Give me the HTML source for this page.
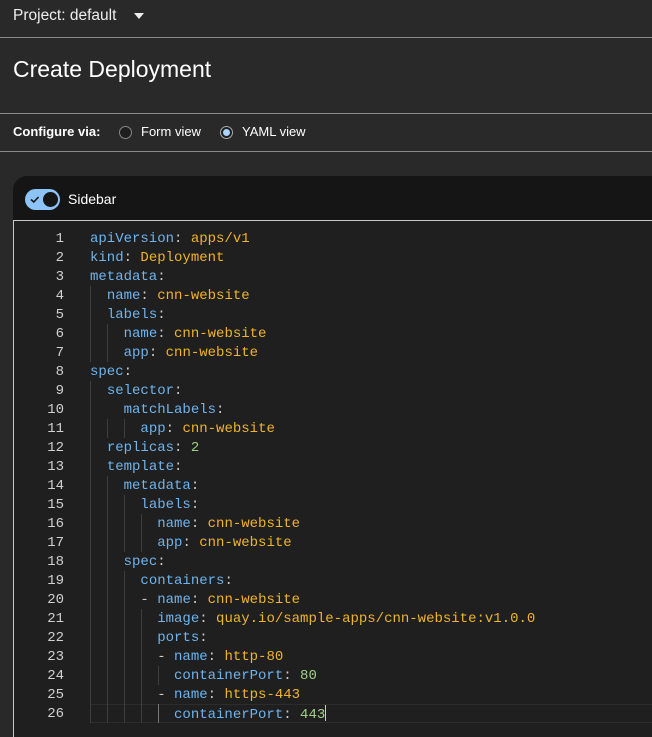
<!DOCTYPE html>
<html style="overflow:hidden;height:737px"><head><meta charset="utf-8"><style>
*{margin:0;padding:0;box-sizing:border-box}
body{width:652px;height:737px;background:#292929;font-family:"Liberation Sans",sans-serif;color:#fff;position:relative;overflow:hidden}
.hr{position:absolute;left:0;width:652px;height:1px;background:#8a8a8a}
.t{position:absolute;white-space:nowrap}
.card{position:absolute;left:13px;top:176px;width:660px;height:561px;background:#151515;border-radius:14px 0 0 0}
.ed{position:absolute;left:13px;top:220px;width:660px;height:517px;background:#1f1f1f;border-top:1px solid #c8c8c8;border-left:1px solid #c8c8c8}
.code{position:absolute;left:0;top:230px;font-family:"Liberation Mono",monospace;font-size:14px;line-height:19px}
.ln{position:absolute;left:0;width:64px;text-align:right;color:#d0d0d0}
.c{position:absolute;left:90px;white-space:pre;color:#9cd0ff}
.k{color:#6fb4ee}.v{color:#f0b429}.n{color:#9fcf85}.p{color:#ccc}
.g{position:absolute;width:1px;background:#3e3e3e}
</style></head><body>
<div class="t" style="left:13px;top:7px;font-size:15.5px;color:#eee">Project: default</div>
<div style="position:absolute;left:134px;top:13px;width:0;height:0;border-left:5px solid transparent;border-right:5px solid transparent;border-top:6px solid #eee"></div>
<div class="hr" style="top:37px"></div>
<div class="t" style="left:13px;top:56px;font-size:23px;color:#fff">Create Deployment</div>
<div class="hr" style="top:113px"></div>
<div class="t" style="left:13px;top:124px;font-size:13px;font-weight:bold">Configure via:</div>
<div style="position:absolute;left:119px;top:126px;width:13px;height:13px;border:1px solid #888;border-radius:50%;background:#1e1e1e"></div>
<div class="t" style="left:141px;top:124px;font-size:13px">Form view</div>
<div style="position:absolute;left:220px;top:126px;width:13px;height:13px;border:1px solid #aaa;border-radius:50%;background:#1e1e1e"><div style="position:absolute;left:2px;top:2px;width:7px;height:7px;border-radius:50%;background:#a8d4ff"></div></div>
<div class="t" style="left:242px;top:124px;font-size:13px">YAML view</div>
<div class="hr" style="top:151px"></div>
<div class="card"></div>
<div style="position:absolute;left:25px;top:189px;width:35px;height:21px;border-radius:11px;background:#8cc4f8"></div>
<div style="position:absolute;left:43px;top:192px;width:15px;height:15px;border-radius:50%;background:#151515"></div>
<svg style="position:absolute;left:30px;top:195px" width="10" height="9"><path d="M1 4.5 L3.8 7 L8.5 2" stroke="#151515" stroke-width="1.6" fill="none"/></svg>
<div class="t" style="left:68px;top:191px;font-size:14px">Sidebar</div>
<div class="ed"></div>
<div style="position:absolute;left:90px;top:704px;width:562px;height:19px;border-top:1px solid #2c2c2c;border-bottom:1px solid #2c2c2c"></div>
<!-- guides -->
<div class="g" style="left:90px;top:286px;height:76px"></div>
<div class="g" style="left:107px;top:324px;height:38px"></div>
<div class="g" style="left:90px;top:381px;height:342px"></div>
<div class="g" style="left:107px;top:419px;height:19px"></div>
<div class="g" style="left:124px;top:419px;height:19px"></div>
<div class="g" style="left:107px;top:476px;height:247px"></div>
<div class="g" style="left:124px;top:495px;height:57px"></div>
<div class="g" style="left:141px;top:514px;height:38px"></div>
<div class="g" style="left:124px;top:571px;height:152px"></div>
<div class="g" style="left:141px;top:609px;height:114px"></div>
<div class="g" style="left:158px;top:666px;height:19px"></div>
<div class="g" style="left:158px;top:704px;height:19px;background:#777"></div>
<div class="code">
<div class="ln" style="top:0">1</div><div class="c" style="top:0"><span class="k">apiVersion</span><span class="p">: </span><span class="v">apps/v1</span></div>
<div class="ln" style="top:19px">2</div><div class="c" style="top:19px"><span class="k">kind</span><span class="p">: </span><span class="v">Deployment</span></div>
<div class="ln" style="top:38px">3</div><div class="c" style="top:38px"><span class="k">metadata</span><span class="p">:</span></div>
<div class="ln" style="top:57px">4</div><div class="c" style="top:57px">  <span class="k">name</span><span class="p">: </span><span class="v">cnn-website</span></div>
<div class="ln" style="top:76px">5</div><div class="c" style="top:76px">  <span class="k">labels</span><span class="p">:</span></div>
<div class="ln" style="top:95px">6</div><div class="c" style="top:95px">    <span class="k">name</span><span class="p">: </span><span class="v">cnn-website</span></div>
<div class="ln" style="top:114px">7</div><div class="c" style="top:114px">    <span class="k">app</span><span class="p">: </span><span class="v">cnn-website</span></div>
<div class="ln" style="top:133px">8</div><div class="c" style="top:133px"><span class="k">spec</span><span class="p">:</span></div>
<div class="ln" style="top:152px">9</div><div class="c" style="top:152px">  <span class="k">selector</span><span class="p">:</span></div>
<div class="ln" style="top:171px">10</div><div class="c" style="top:171px">    <span class="k">matchLabels</span><span class="p">:</span></div>
<div class="ln" style="top:190px">11</div><div class="c" style="top:190px">      <span class="k">app</span><span class="p">: </span><span class="v">cnn-website</span></div>
<div class="ln" style="top:209px">12</div><div class="c" style="top:209px">  <span class="k">replicas</span><span class="p">: </span><span class="n">2</span></div>
<div class="ln" style="top:228px">13</div><div class="c" style="top:228px">  <span class="k">template</span><span class="p">:</span></div>
<div class="ln" style="top:247px">14</div><div class="c" style="top:247px">    <span class="k">metadata</span><span class="p">:</span></div>
<div class="ln" style="top:266px">15</div><div class="c" style="top:266px">      <span class="k">labels</span><span class="p">:</span></div>
<div class="ln" style="top:285px">16</div><div class="c" style="top:285px">        <span class="k">name</span><span class="p">: </span><span class="v">cnn-website</span></div>
<div class="ln" style="top:304px">17</div><div class="c" style="top:304px">        <span class="k">app</span><span class="p">: </span><span class="v">cnn-website</span></div>
<div class="ln" style="top:323px">18</div><div class="c" style="top:323px">    <span class="k">spec</span><span class="p">:</span></div>
<div class="ln" style="top:342px">19</div><div class="c" style="top:342px">      <span class="k">containers</span><span class="p">:</span></div>
<div class="ln" style="top:361px">20</div><div class="c" style="top:361px">      <span class="p">- </span><span class="k">name</span><span class="p">: </span><span class="v">cnn-website</span></div>
<div class="ln" style="top:380px">21</div><div class="c" style="top:380px">        <span class="k">image</span><span class="p">: </span><span class="v">quay.io/sample-apps/cnn-website:v1.0.0</span></div>
<div class="ln" style="top:399px">22</div><div class="c" style="top:399px">        <span class="k">ports</span><span class="p">:</span></div>
<div class="ln" style="top:418px">23</div><div class="c" style="top:418px">        <span class="p">- </span><span class="k">name</span><span class="p">: </span><span class="v">http-80</span></div>
<div class="ln" style="top:437px">24</div><div class="c" style="top:437px">          <span class="k">containerPort</span><span class="p">: </span><span class="n">80</span></div>
<div class="ln" style="top:456px">25</div><div class="c" style="top:456px">        <span class="p">- </span><span class="k">name</span><span class="p">: </span><span class="v">https-443</span></div>
<div class="ln" style="top:475px">26</div><div class="c" style="top:475px">          <span class="k">containerPort</span><span class="p">: </span><span class="n">443</span><span style="display:inline-block;width:1px;height:16px;background:#ccc;vertical-align:-3px"></span></div>
</div>
</body></html>
